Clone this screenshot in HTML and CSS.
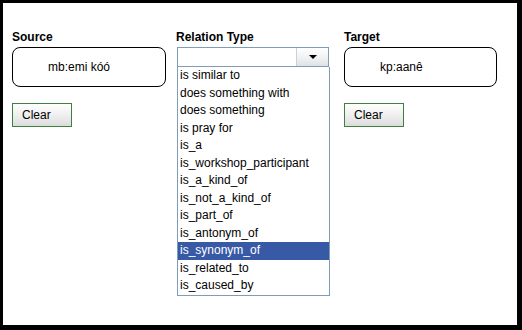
FILE: index.html
```html
<!DOCTYPE html>
<html lang="en">
<head>
    <meta charset="UTF-8">
    <title>Relation Editor</title>
    <link rel="stylesheet" href="styles.css">
</head>
<body>
    <div class="frame">
        <!-- Source column -->
        <div class="column col-source">
            <div class="label">Source</div>
            <div class="node-box">mb:emi kóó</div>
            <button class="clear-btn">Clear</button>
        </div>

        <!-- Relation type column -->
        <div class="column col-relation">
            <div class="label">Relation Type</div>
            <div class="combo">
                <div class="combo-value"></div>
                <div class="combo-arrow"><span class="arrow"></span></div>
            </div>
            <ul class="combo-list">
                <li>is similar to</li>
                <li>does something with</li>
                <li>does something</li>
                <li>is pray for</li>
                <li>is_a</li>
                <li>is_workshop_participant</li>
                <li>is_a_kind_of</li>
                <li>is_not_a_kind_of</li>
                <li>is_part_of</li>
                <li>is_antonym_of</li>
                <li class="selected">is_synonym_of</li>
                <li>is_related_to</li>
                <li>is_caused_by</li>
            </ul>
        </div>

        <!-- Target column -->
        <div class="column col-target">
            <div class="label">Target</div>
            <div class="node-box">kp:aanê</div>
            <button class="clear-btn">Clear</button>
        </div>
    </div>
</body>
</html>
```

FILE: styles.css
```css
html, body {
    margin: 0;
    height: 100%;
    background-color: #000;
}
body {
    font-family: "Liberation Sans", Arial, sans-serif;
    font-size: 12px;
    color: #000;
    padding: 3px 5px 5px 3px;
    box-sizing: border-box;
}
.frame {
    background-color: #fff;
    width: 514px;
    height: 322px;
    display: flex;
    align-items: flex-start;
    padding: 27px 0 0 9px;
    box-sizing: border-box;
}
.column {
    display: flex;
    flex-direction: column;
    align-items: flex-start;
}
.col-source {
    width: 164px;
}
.col-relation {
    width: 168px;
}
.label {
    font-weight: bold;
    line-height: 14px;
    height: 14px;
    margin-bottom: 3px;
}

/* Source / target boxes */
.node-box {
    width: 154px;
    height: 40px;
    box-sizing: border-box;
    border: 1px solid #000;
    border-radius: 8px;
    padding-left: 35px;
    line-height: 38px;
}
.col-target .node-box {
    width: 153px;
}
.clear-btn {
    margin-top: 16px;
    width: 60px;
    height: 24px;
    border: 1px solid #3f7f3f;
    background: linear-gradient(#ffffff, #ececec 60%, #dcdcdc);
    font-family: inherit;
    font-size: 12px;
    text-align: left;
    padding: 0 0 0 9px;
    color: #000;
}

/* Relation combo */
.combo {
    margin-left: 1px;
    width: 152px;
    height: 20px;
    box-sizing: border-box;
    border: 1px solid #7f9db9;
    display: flex;
}
.combo-value {
    flex: 1;
    background-color: #fff;
}
.combo-arrow {
    width: 31px;
    border-left: 1px solid #c8d2dc;
    background: linear-gradient(#ffffff, #eef0f2 60%, #dde1e6);
    display: flex;
    align-items: center;
    justify-content: center;
}
.arrow {
    width: 0;
    height: 0;
    border-left: 4px solid transparent;
    border-right: 4px solid transparent;
    border-top: 4px solid #000;
}
.combo-list {
    list-style: none;
    margin: 0 0 0 1px;
    padding: 0;
    width: 153px;
    box-sizing: border-box;
    border: 1px solid #7f9db9;
    border-top: none;
    background-color: #fff;
}
.combo-list li {
    height: 17.5px;
    line-height: 17.5px;
    padding-left: 2px;
    white-space: nowrap;
}
.combo-list li.selected {
    background-color: #3859a6;
    color: #fff;
}
```
